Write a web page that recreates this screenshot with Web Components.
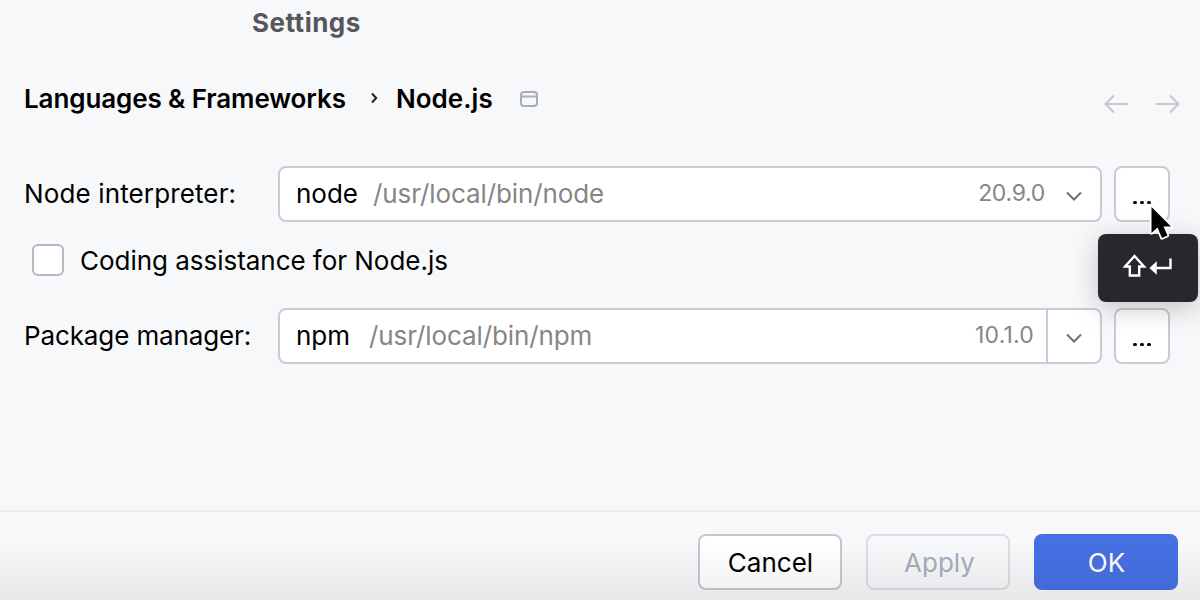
<!DOCTYPE html>
<html>
<head>
<meta charset="utf-8">
<title>Settings</title>
<style>
  html, body { margin: 0; height: 100%; background: #f7f8fa; }
  body { font-family: 'Inter', 'Liberation Sans', sans-serif; font-size: 26px; color: #000; overflow: hidden; }
</style>
</head>
<body>
<settings-dialog>
  <bread-crumbs slot="head" parent="Languages &amp; Frameworks" current="Node.js"></bread-crumbs>
  <form-row label="Node interpreter:" label-width="242" spacing="0.13">
    <path-combo name="node" path="/usr/local/bin/node" version="20.9.0" spacing="-0.3"></path-combo>
    <dots-button></dots-button>
  </form-row>
  <check-row>Coding assistance for Node.js</check-row>
  <form-row label="Package manager:" label-width="242" spacing="-0.12">
    <path-combo name="npm" path="/usr/local/bin/npm" version="10.1.0" spacing="0.2" split></path-combo>
    <dots-button></dots-button>
  </form-row>
  <dialog-button slot="foot">Cancel</dialog-button>
  <dialog-button slot="foot" kind="disabled">Apply</dialog-button>
  <dialog-button slot="foot" kind="primary">OK</dialog-button>
  <shortcut-tip slot="over"></shortcut-tip>
</settings-dialog>

<script>
class SettingsDialog extends HTMLElement {
    constructor() {
        super();
        this.attachShadow({ mode: 'open' });
    }
    connectedCallback() {
        this.shadowRoot.innerHTML = /*html*/`
        <style>
            :host { display: flex; flex-direction: column; position: relative; width: 1200px; height: 600px; }
            .title { height: 46px; padding-left: 252px; font-size: 26px; font-weight: 700; line-height: 46px; color: #55575b; letter-spacing: 0.5px; }
            .main { flex: 1; padding: 0 30px 0 24px; display: flex; flex-direction: column; }
            .form { display: flex; flex-direction: column; margin-top: 52px; }
            .foot { position: relative; height: 90px; box-sizing: border-box; border-top: 2px solid #ebecf0; padding: 22px 22px 0 0; display: flex; justify-content: flex-end; gap: 24px; }
            .foot::after { content: ''; position: absolute; inset: 0; pointer-events: none;
                background: linear-gradient(rgba(0,0,0,0) 35%, rgba(0,0,0,.065) 100%); }
        </style>
        <div class="title">Settings</div>
        <div class="main">
            <slot name="head"></slot>
            <div class="form"><slot></slot></div>
        </div>
        <div class="foot"><slot name="foot"></slot></div>
        <slot name="over"></slot>`;
    }
}

class BreadCrumbs extends HTMLElement {
    constructor() {
        super();
        this.attachShadow({ mode: 'open' });
    }
    connectedCallback() {
        this.shadowRoot.innerHTML = /*html*/`
        <style>
            :host { display: flex; align-items: center; height: 32px; margin-top: 36px; font-weight: 600; letter-spacing: -0.1px; }
            .sep { margin: 0 18px 0 24px; display: flex; }
            .cur { letter-spacing: 0.05px; }
            .pin { margin-left: 27px; display: flex; margin-top: 1px; }
            .nav { margin-left: auto; margin-right: -10px; display: flex; gap: 28px; margin-top: 12px; }
        </style>
        <span>${this.getAttribute('parent')}</span>
        <span class="sep"><svg width="8" height="12" viewBox="0 0 8 12" fill="none"><path d="M2 1.500 6.200 6 2 10.500" stroke="#222" stroke-width="2"/></svg></span>
        <span class="cur">${this.getAttribute('current')}</span>
        <span class="pin"><svg width="18" height="16" viewBox="0 0 18 16" fill="none" stroke="#a9adbb" stroke-width="2"><rect x="1" y="1" width="16" height="14" rx="3"/><path d="M1 5.500h16"/></svg></span>
        <span class="nav">
            <svg width="24" height="20" viewBox="0 0 24 20" fill="none" stroke="#c6c8ce" stroke-width="2"><path d="M24 10H1.500M10 1.500 1.500 10l8.500 8.500"/></svg>
            <svg width="24" height="20" viewBox="0 0 24 20" fill="none" stroke="#c6c8ce" stroke-width="2"><path d="M0 10h22.500M14 1.500 22.500 10 14 18.500"/></svg>
        </span>`;
    }
}

class FormRow extends HTMLElement {
    constructor() {
        super();
        this.attachShadow({ mode: 'open' });
    }
    connectedCallback() {
        const w = this.getAttribute('label-width');
        this.shadowRoot.innerHTML = /*html*/`
        <style>
            :host { display: flex; align-items: center; gap: 12px; height: 56px; }
            .label { width: ${w}px; flex: none; margin-top: -2px; letter-spacing: ${this.getAttribute('spacing')}px; }
        </style>
        <span class="label">${this.getAttribute('label')}</span>
        <slot></slot>`;
    }
}

class PathCombo extends HTMLElement {
    constructor() {
        super();
        this.attachShadow({ mode: 'open' });
    }
    connectedCallback() {
        const split = this.hasAttribute('split');
        this.shadowRoot.innerHTML = /*html*/`
        <style>
            :host { display: flex; align-items: center; box-sizing: border-box; width: 824px; height: 56px; background: #fff; border: 2px solid #c9ccd6; border-radius: 8px; padding-left: 16px; }
            span { margin-top: -2px; }
            .path { color: #858688; margin-left: 15px; letter-spacing: -0.1px; }
            .ver { margin-left: auto; color: #858688; font-size: 23px; letter-spacing: ${this.getAttribute('spacing')}px; }
            .arrow { box-sizing: border-box; display: flex; align-items: center; justify-content: center; width: 54px; height: 100%; flex: none; margin: 0 0 0 ${split ? 12 : 1}px; }
            .arrow svg { margin: 3px 0 0 ${split ? 0 : 2}px; }
            :host([split]) .arrow { border-left: 2px solid #c9ccd6; }
            :host([split]) .path { margin-left: 19px; }
        </style>
        <span>${this.getAttribute('name')}</span>
        <span class="path">${this.getAttribute('path')}</span>
        <span class="ver">${this.getAttribute('version')}</span>
        <span class="arrow"><svg width="16" height="10" viewBox="0 0 16 10" fill="none"><path d="M1 1.500 8 8.500 15 1.500" stroke="#6c707e" stroke-width="2"/></svg></span>`;
    }
}

class DotsButton extends HTMLElement {
    constructor() {
        super();
        this.attachShadow({ mode: 'open' });
    }
    connectedCallback() {
        this.shadowRoot.innerHTML = /*html*/`
        <style>
            :host { display: flex; justify-content: center; align-items: flex-end; box-sizing: border-box; width: 56px; height: 56px; background: #fff; border: 2px solid #c9ccd6; border-radius: 8px; padding-bottom: 16px; }
            i { width: 3.500px; height: 3.500px; border-radius: 50%; background: #000; margin: 0 1.750px; }
        </style>
        <i></i><i></i><i></i>`;
    }
}

class CheckRow extends HTMLElement {
    constructor() {
        super();
        this.attachShadow({ mode: 'open' });
    }
    connectedCallback() {
        this.shadowRoot.innerHTML = /*html*/`
        <style>
            :host { display: flex; align-items: center; gap: 16px; height: 32px; margin: 22px 0 32px 8px; letter-spacing: -0.03px; }
            .box { box-sizing: border-box; width: 32px; height: 32px; background: #fff; border: 2px solid #b4b8c5; border-radius: 6px; }
            .txt { margin-top: 1px; }
        </style>
        <span class="box"></span>
        <span class="txt"><slot></slot></span>`;
    }
}

class DialogButton extends HTMLElement {
    constructor() {
        super();
        this.attachShadow({ mode: 'open' });
    }
    connectedCallback() {
        this.shadowRoot.innerHTML = /*html*/`
        <style>
            :host { display: flex; align-items: center; justify-content: center; box-sizing: border-box; width: 144px; height: 56px; background: #fff; border: 2px solid #c5c7d0; border-radius: 8px; padding-left: 1px; }
            :host([kind="disabled"]) { background: transparent; border-color: #dcdde2; color: #a8adbd; padding-left: 3px; }
            :host([kind="primary"]) { background: #4670e3; border-color: #4670e3; color: #fff; }
        </style>
        <slot></slot>`;
    }
}

class ShortcutTip extends HTMLElement {
    constructor() {
        super();
        this.attachShadow({ mode: 'open' });
    }
    connectedCallback() {
        this.shadowRoot.innerHTML = /*html*/`
        <style>
            :host { position: absolute; left: 1098px; top: 234px; width: 100px; height: 68px; background: #27282e; border-radius: 8px; box-shadow: 0 6px 28px rgba(0,0,0,.22); display: flex; align-items: center; justify-content: center; }
            .keys { margin-bottom: 4px; }
            .cursor { position: absolute; left: 50px; top: -30px; }
        </style>
        <svg class="keys" width="50" height="24" viewBox="0 0 50 24" fill="none" stroke="#fff" stroke-width="2.400"><path d="M11.500 2 2 12.500h4.800v9h9.400v-9H21Z"/><path d="M47.500 4.500V14H32"/><path d="M27.500 14 33 9v10Z" fill="#fff" stroke-width="1.500"/></svg>
        <svg class="cursor" width="30" height="42" viewBox="0 0 30 42"><path d="M3.500 3V29L9.500 23.500 14 34 19.500 31.500 15.500 22.500H23Z" fill="#000" stroke="#fff" stroke-width="3.500" paint-order="stroke" stroke-linejoin="round"/></svg>`;
    }
}

customElements.define('settings-dialog', SettingsDialog);
customElements.define('bread-crumbs', BreadCrumbs);
customElements.define('form-row', FormRow);
customElements.define('path-combo', PathCombo);
customElements.define('dots-button', DotsButton);
customElements.define('check-row', CheckRow);
customElements.define('dialog-button', DialogButton);
customElements.define('shortcut-tip', ShortcutTip);
</script>
</body>
</html>
